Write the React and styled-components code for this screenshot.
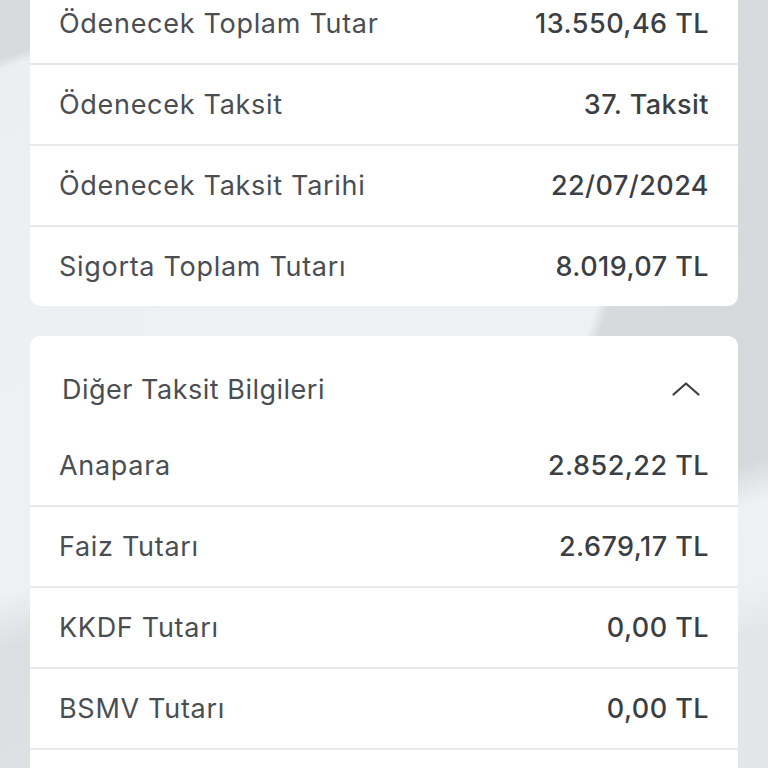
import React from 'react';
import styled, { createGlobalStyle } from 'styled-components';

const GlobalStyle = createGlobalStyle`
  html, body {
    margin: 0;
    padding: 0;
  }
  body {
    overflow: hidden;
    font-family: Inter, "Noto Sans", "Liberation Sans", sans-serif;
    background-color: #e6e8ea;
    background-image:
      linear-gradient(110deg, transparent 0 12px, #eef0f2 24px 440px, transparent 452px),
      linear-gradient(160deg, #d8dbde 0 56px, #eceef0 66px, #eef0f2 560px, #dcdfe2 612px, #e0e3e5 100%),
      linear-gradient(160deg, #dde0e3 0 20px, #d8dbde 40px, #d6d9dc 560px, #f0f1f3 600px, #eeeff1 680px, #e3e5e7 720px);
    background-size: 480px 36px, 50% 100%, 50% 100%;
    background-position: 130px 302px, left top, right top;
    background-repeat: no-repeat;
  }
`;

const Page = styled.div`
  display: flex;
  flex-direction: column;
  gap: 30px;
  padding: 0 30px;
  margin-top: -16px;
`;

const Card = styled.section`
  background: #ffffff;
  border-radius: 10px;
  overflow: hidden;
`;

const Row = styled.div`
  display: flex;
  align-items: center;
  justify-content: space-between;
  height: 79px;
  padding: 0 29px;
  border-bottom: ${({ $last }) => ($last ? 'none' : '2px solid #e7e8ea')};
`;

const Label = styled.span`
  font-size: 27px;
  font-weight: 400;
  color: #4a4e53;
  letter-spacing: 0.7px;
`;

const Value = styled.span`
  font-size: 27px;
  font-weight: 500;
  color: #3b3f44;
  letter-spacing: 0.45px;
`;

const Header = styled.div`
  display: flex;
  align-items: center;
  justify-content: space-between;
  height: 30px;
  padding: 38px 38px 22px 32px;
`;

const HeaderTitle = styled.span`
  font-size: 27px;
  color: #4a4e53;
  letter-spacing: 0.5px;
`;

const Chevron = () => (
  <svg width="28" height="14" viewBox="0 0 28 14" fill="none">
    <path d="M1.5 12.5 L14 1.5 L26.5 12.5" stroke="#3b3f44" strokeWidth="2.2" strokeLinecap="round" strokeLinejoin="round" />
  </svg>
);

const summary = [
  ['Ödenecek Toplam Tutar', '13.550,46 TL'],
  ['Ödenecek Taksit', '37. Taksit'],
  ['Ödenecek Taksit Tarihi', '22/07/2024'],
  ['Sigorta Toplam Tutarı', '8.019,07 TL'],
];

const details = [
  ['Anapara', '2.852,22 TL'],
  ['Faiz Tutarı', '2.679,17 TL'],
  ['KKDF Tutarı', '0,00 TL'],
  ['BSMV Tutarı', '0,00 TL'],
];

const App = () => (
  <>
    <GlobalStyle />
    <Page>
      <Card>
        {summary.map(([label, value], i) => (
          <Row key={label} $last={i === summary.length - 1}>
            <Label>{label}</Label>
            <Value>{value}</Value>
          </Row>
        ))}
      </Card>
      <Card>
        <Header>
          <HeaderTitle>Diğer Taksit Bilgileri</HeaderTitle>
          <Chevron />
        </Header>
        {details.map(([label, value]) => (
          <Row key={label}>
            <Label>{label}</Label>
            <Value>{value}</Value>
          </Row>
        ))}
        <Row $last />
      </Card>
    </Page>
  </>
);

export default App;
